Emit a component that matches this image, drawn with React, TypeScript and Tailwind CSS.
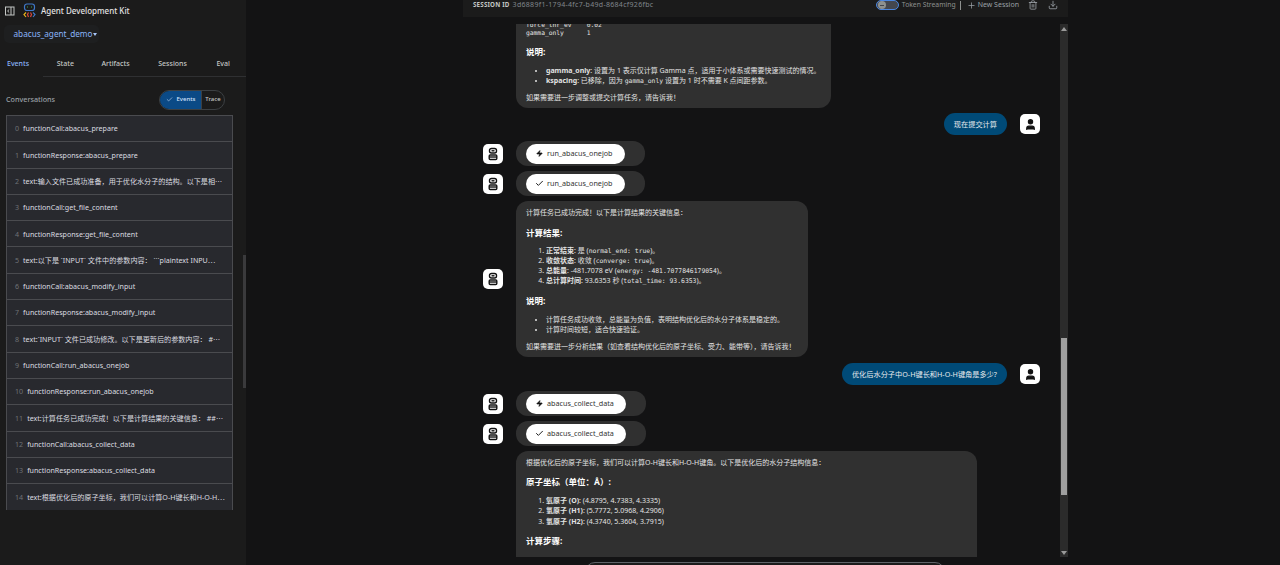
import { Check, Download, Plus, Trash2, Zap, User } from "lucide-react";

const FONT = "font-['Noto_Sans','Noto_Sans_CJK_SC',sans-serif]";
const MONO = "font-['DejaVu_Sans_Mono','Noto_Sans_CJK_SC',monospace]";

const EVENTS = [
  "functionCall:abacus_prepare",
  "functionResponse:abacus_prepare",
  "text:输入文件已成功准备，用于优化水分子的结构。以下是相⋯",
  "functionCall:get_file_content",
  "functionResponse:get_file_content",
  "text:以下是 `INPUT` 文件中的参数内容： ```plaintext INPU⋯",
  "functionCall:abacus_modify_input",
  "functionResponse:abacus_modify_input",
  "text:`INPUT` 文件已成功修改。以下是更新后的参数内容： #⋯",
  "functionCall:run_abacus_onejob",
  "functionResponse:run_abacus_onejob",
  "text:计算任务已成功完成！以下是计算结果的关键信息： ##⋯",
  "functionCall:abacus_collect_data",
  "functionResponse:abacus_collect_data",
  "text:根据优化后的原子坐标，我们可以计算O-H键长和H-O-H⋯",
];

function BotAvatar() {
  return (
    <div className="flex h-5 w-5 shrink-0 items-center justify-center rounded-[5px] bg-white">
      <svg width="14" height="14" viewBox="0 0 14 14" fill="none" stroke="#111" strokeWidth="1.4">
        <rect x="3.5" y="1.5" width="7" height="4.5" rx="2" />
        <path d="M5.5 3.8h3" />
        <rect x="3.2" y="8" width="7.6" height="4.5" rx="1" />
        <path d="M3.2 10h7.6" />
      </svg>
    </div>
  );
}

function UserAvatar() {
  return (
    <div className="flex h-5 w-5 shrink-0 items-center justify-center rounded-[5px] bg-white">
      <User size={13} color="#111" fill="#111" strokeWidth={2} />
    </div>
  );
}

function ToolChip({ name, done }: { name: string; done?: boolean }) {
  return (
    <div className="flex items-center gap-[13px]">
      <BotAvatar />
      <div className="rounded-[12px] bg-[#303030] py-[2.5px] pl-[10px] pr-[20px]">
        <div className="flex h-5 items-center gap-[3px] rounded-full bg-white pl-[9px] pr-3 text-[7.2px] text-[#333]">
          <span className="flex w-[9px] justify-center">
            {done ? (
              <Check size={9} color="#111" strokeWidth={2.5} />
            ) : (
              <Zap size={7} color="#111" fill="#111" />
            )}
          </span>
          <span>{name}</span>
        </div>
      </div>
    </div>
  );
}

function UserMessage({ text }: { text: string }) {
  return (
    <div className="flex items-center justify-end gap-[13px] pr-[28px]">
      <div className="flex h-[22px] items-center rounded-full bg-[#004a77] px-[10px] text-[7.2px] text-[#e8eaed]">
        {text}
      </div>
      <UserAvatar />
    </div>
  );
}

function Code({ children }: { children: string }) {
  return <code className={`${MONO} text-[6.4px]`}>{children}</code>;
}

export default function App() {
  return (
    <div className={`${FONT} flex h-[565px] w-[1280px] overflow-hidden bg-[#131314] text-[#e3e3e3]`}>
      {/* Sidebar */}
      <aside className="relative flex w-[246px] shrink-0 flex-col bg-[#1b1b1b]">
        <div className="flex h-[21px] items-center pl-[5px]">
          <svg width="10" height="10" viewBox="0 0 10 10" fill="none" stroke="#c4c7c5" strokeWidth="1">
            <rect x="0.5" y="1" width="8.5" height="8" />
            <path d="M6 1v8M4.2 3.5L2.6 5l1.6 1.5" />
          </svg>
          <svg className="ml-[8px]" width="13" height="16" viewBox="0 0 13 16" fill="none" strokeWidth="1.2">
            <rect x="1.5" y="1" width="10" height="6.5" rx="2.5" stroke="#3f78c9" />
            <path d="M4 4h1M8 4h1" stroke="#3ba55d" />
            <path d="M3 9.5L1 11.5L3 14" stroke="#e8b21c" />
            <path d="M10 9.5L12 11.5L10 14" stroke="#3f78c9" />
            <path d="M5.5 9.5L4.5 11.5L5.5 14" stroke="#d9483b" />
            <path d="M7.5 9.5L8.5 11.5L7.5 14" stroke="#d9483b" />
          </svg>
          <span className="ml-[5px] text-[8px] font-medium text-[#e3e3e3]">Agent Development Kit</span>
        </div>
        <div className="ml-[4px] mt-[4px] flex h-[18px] w-[95px] items-center rounded-[5px] bg-[#1e1f20] pl-[9.5px] text-[8.2px] text-[#8ab4f8]">
          abacus_agent_demo
          <span className="ml-px h-0 w-0 border-x-[2.5px] border-t-[3px] border-x-transparent border-t-[#a8c7fa]" />
        </div>

        <div className="mt-[10px] flex h-[24px] items-center justify-between border-b border-[#2f3032] pl-[7px] pr-[16px] text-[7px] font-medium text-[#c4c7c5]">
          <span className="text-[#8ab4f8]">Events</span>
          <span>State</span>
          <span className="pr-[1px]">Artifacts</span>
          <span className="pr-[2px]">Sessions</span>
          <span>Eval</span>
        </div>
        <div className="-mt-px h-px w-[43px] bg-[#1b1b1b]" />

        <div className="mt-[12px] flex h-[21px] items-center pl-[6px] pr-[21px]">
          <span className="text-[7.2px] font-medium text-[#9aa0a6]">Conversations</span>
          <div className="ml-auto flex h-[20px] w-[66px] overflow-hidden rounded-full border border-[#3c4043] text-[6px] font-medium">
            <div className="flex w-[41px] items-center justify-center gap-[4px] bg-[#0b4a86] text-[#d3e3fd]">
              <Check size={7} />
              Events
            </div>
            <div className="flex flex-1 items-center justify-center border-l border-[#3c4043] text-[#c4c7c5]">
              Trace
            </div>
          </div>
        </div>

        <div className="ml-[6px] mt-[5px] w-[227px] border-x border-t border-[#4a4b4f] bg-[#28292e]">
          {EVENTS.map((text, i) => (
            <div
              key={i}
              className={`flex h-[26.3px] items-center gap-[4px] whitespace-nowrap pl-[8px] text-[7.1px] text-[#dcdde0] ${i < 14 ? "border-b border-[#4a4b4f]" : ""}`}
            >
              <span className="text-[#6f7276]">{i}</span>
              <span>{text}</span>
            </div>
          ))}
        </div>

        <div className="absolute right-0 top-[255px] h-[133px] w-[3px] bg-[#3a3a3c]" />
      </aside>

      {/* Main */}
      <main className="relative flex flex-1 flex-col">
        <header className="ml-[217px] flex h-[17px] w-[605px] shrink-0 items-center bg-[#1b1b1b] pb-[7px] pl-[10px] pr-[10px] text-[7px] text-[#9aa0a6]">
          <span className="text-[6.2px] font-bold tracking-[0.2px] text-[#c4c7c5]">SESSION ID</span>
          <span className="ml-[3px] tracking-[0.3px] text-[#80868b]">3d6889f1-1794-4fc7-b49d-8684cf926fbc</span>
          <div className="ml-auto flex items-center">
            <div className="flex h-[10px] w-[23px] items-center rounded-full border border-[#4a86e0] bg-[#44474e]">
              <div className="ml-px flex h-[8px] w-[8px] items-center justify-center rounded-full bg-[#8e918f]">
                <div className="h-px w-[4px] bg-[#44474e]" />
              </div>
            </div>
            <span className="ml-[3px] text-[6.8px] text-[#8e918f]">Token Streaming</span>
            <div className="ml-[4px] h-[9px] w-px bg-[#8e918f]" />
            <Plus className="ml-[6px]" size={9} color="#9aa0a6" />
            <span className="ml-[2px]">New Session</span>
            <Trash2 className="ml-[9px]" size={10} color="#9aa0a6" />
            <Download className="ml-[10px]" size={10} color="#9aa0a6" />
          </div>
        </header>

        <div className="relative ml-[237px] mt-[7px] h-[533px] w-[585px] overflow-hidden">
          <div className="-mt-[8px] flex flex-col">
            {/* First response bubble */}
            <div className="ml-[33px] w-[315px] whitespace-nowrap rounded-b-[12px] bg-[#303030] px-[10px] pb-[5px] pt-[5px] text-[7px] leading-[10px]">
              <pre className={`${MONO} text-[6.3px] leading-[8.3px]`}>{"force_thr_ev    0.02\ngamma_only      1"}</pre>
              <h3 className="mt-[7px] text-[8.5px] font-bold leading-[14px] text-white">说明:</h3>
              <ul className="mt-[7px] list-disc pl-[20px]">
                <li>
                  <b>gamma_only</b>: 设置为 1 表示仅计算 Gamma 点，适用于小体系或需要快速测试的情况。
                </li>
                <li>
                  <b>kspacing</b>: 已移除，因为 <Code>gamma_only</Code> 设置为 1 时不需要 K 点间距参数。
                </li>
              </ul>
              <p className="mt-[7px]">如果需要进一步调整或提交计算任务，请告诉我！</p>
            </div>

            <div className="mt-[5.5px]">
              <UserMessage text="现在提交计算" />
            </div>

            <div className="mt-[6px] flex flex-col gap-[5px]">
              <ToolChip name="run_abacus_onejob" />
              <ToolChip name="run_abacus_onejob" done />
            </div>

            {/* Result bubble */}
            <div className="mt-[5px] flex items-center gap-[13px]">
              <BotAvatar />
              <div className="w-[292px] whitespace-nowrap rounded-[12px] bg-[#303030] px-[10px] pb-[5px] pt-[7px] text-[7px] leading-[10px]">
                <p>计算任务已成功完成！以下是计算结果的关键信息：</p>
                <h3 className="mt-[8px] text-[8.5px] font-bold leading-[14px] text-white">计算结果:</h3>
                <ol className="mt-[6px] list-decimal pl-[20px]">
                  <li><b>正常结束</b>: 是 (<Code>normal_end: true</Code>)。</li>
                  <li><b>收敛状态</b>: 收敛 (<Code>converge: true</Code>)。</li>
                  <li><b>总能量</b>: -481.7078 eV (<Code>energy: -481.7077846179054</Code>)。</li>
                  <li><b>总计算时间</b>: 93.6353 秒 (<Code>total_time: 93.6353</Code>)。</li>
                </ol>
                <h3 className="mt-[8px] text-[8.5px] font-bold leading-[14px] text-white">说明:</h3>
                <ul className="mt-[7px] list-disc pl-[20px]">
                  <li>计算任务成功收敛，总能量为负值，表明结构优化后的水分子体系是稳定的。</li>
                  <li>计算时间较短，适合快速验证。</li>
                </ul>
                <p className="mt-[7px]">如果需要进一步分析结果（如查看结构优化后的原子坐标、受力、能带等），请告诉我！</p>
              </div>
            </div>

            <div className="mt-[6px]">
              <UserMessage text="优化后水分子中O-H键长和H-O-H键角是多少?" />
            </div>

            <div className="mt-[6px] flex flex-col gap-[5px]">
              <ToolChip name="abacus_collect_data" />
              <ToolChip name="abacus_collect_data" done />
            </div>

            {/* Last bubble, cut off by the scroll area */}
            <div className="ml-[33px] mt-[5px] w-[461px] whitespace-nowrap rounded-t-[12px] bg-[#303030] px-[10px] pb-[20px] pt-[7px] text-[7px] leading-[10px]">
              <p>根据优化后的原子坐标，我们可以计算O-H键长和H-O-H键角。以下是优化后的水分子结构信息：</p>
              <h3 className="mt-[7px] text-[8.5px] font-bold leading-[14px] text-white">原子坐标（单位：Å）:</h3>
              <ol className="mt-[7px] list-decimal pl-[20px] leading-[10.3px]">
                <li><b>氧原子 (O)</b>: (4.8795, 4.7383, 4.3335)</li>
                <li><b>氢原子 (H1)</b>: (5.7772, 5.0968, 4.2906)</li>
                <li><b>氢原子 (H2)</b>: (4.3740, 5.3604, 3.7915)</li>
              </ol>
              <h3 className="mt-[7px] text-[8.5px] font-bold leading-[14px] text-white">计算步骤:</h3>
            </div>
          </div>

          {/* Scrollbar */}
          <div className="absolute inset-y-0 right-0 w-[8px] bg-[#2b2b2b]">
            <div className="mx-auto mt-[3px] h-0 w-0 border-x-[3px] border-b-[4px] border-x-transparent border-b-[#9a9a9a]" />
            <div className="absolute left-[1px] right-[1px] top-[314px] h-[157px] bg-[#9f9f9f]" />
            <div className="absolute bottom-[2px] left-[1px] h-0 w-0 border-x-[3px] border-t-[4px] border-x-transparent border-t-[#9a9a9a]" />
          </div>
        </div>

        {/* Input box, mostly below the fold */}
        <div className="absolute left-[339px] top-[562px] h-[20px] w-[360px] rounded-[10px] border border-[#5f6368] bg-[#1b1b1b]" />
      </main>
    </div>
  );
}
